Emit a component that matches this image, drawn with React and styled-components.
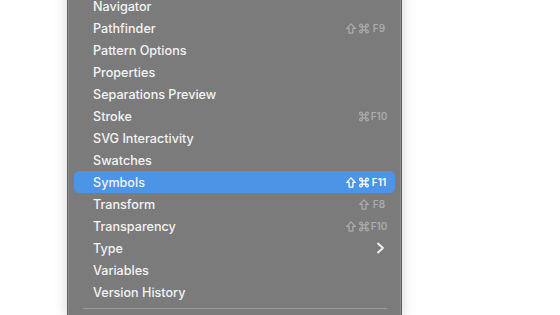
import React from "react";
import styled, { createGlobalStyle } from "styled-components";

const Global = createGlobalStyle`
  html, body { margin: 0; padding: 0; background: #ffffff; }
  body { font-family: Inter, "Noto Sans", "Liberation Sans", sans-serif; -webkit-font-smoothing: antialiased; }
`;

const Page = styled.div`
  width: 560px;
  height: 315px;
  overflow: hidden;
  background: #ffffff;
  padding-left: 67px;
  box-sizing: border-box;
`;

const Menu = styled.div`
  width: 335px;
  margin-top: -11px;
  padding: 5px 6px 8px;
  box-sizing: border-box;
  background: #7b7b7b;
  border: 1px solid #5e5e5e;
  box-shadow: inset 0 0 0 1px #8e8e8e, 0 0 12px rgba(0, 0, 0, 0.18);
  display: flex;
  flex-direction: column;
`;

const Row = styled.div`
  height: 22px;
  display: flex;
  align-items: center;
  padding: 0 7px 0 19px;
  border-radius: 5px;
  background: ${(p) => (p.$active ? "#4c95e6" : "transparent")};
  color: #f4f4f4;
  font-size: 12.6px;
  font-weight: 500;
`;

const Label = styled.span`
  flex: 1;
`;

const Shortcut = styled.span`
  display: flex;
  align-items: center;
  gap: 3px;
  color: ${(p) => (p.$active ? "#ffffff" : "#acacac")};
`;

const ModIcon = styled.svg`
  width: 10px;
  height: 11px;
  display: block;
`;

const Key = styled.span`
  font-size: 10px;
  font-weight: 600;
  width: 18px;
  margin-left: -2px;
  text-align: center;
`;

const Chevron = styled.svg`
  width: 9px;
  height: 12px;
  margin-right: 3px;
`;

const Separator = styled.div`
  height: 1px;
  background: #9a9a9a;
  margin: 5px 8px 0 9px;
`;

function Shift() {
  return (
    <ModIcon viewBox="0 0 10 11">
      <path
        d="M5 0.9 L9.2 5.4 L6.9 5.4 L6.9 10.1 L3.1 10.1 L3.1 5.4 L0.8 5.4 Z"
        fill="none"
        stroke="currentColor"
        strokeWidth="1.3"
        strokeLinejoin="round"
      />
    </ModIcon>
  );
}

function Cmd() {
  return (
    <ModIcon viewBox="0 0 10 11">
      <path
        d="M3.3 3.8 L6.7 3.8 L6.7 7.2 L3.3 7.2 Z M3.3 3.8 L3.3 2.6 A1.35 1.35 0 1 0 1.95 3.8 L3.3 3.8 M6.7 3.8 L6.7 2.6 A1.35 1.35 0 1 1 8.05 3.8 L6.7 3.8 M3.3 7.2 L3.3 8.4 A1.35 1.35 0 1 1 1.95 7.2 L3.3 7.2 M6.7 7.2 L6.7 8.4 A1.35 1.35 0 1 0 8.05 7.2 L6.7 7.2"
        fill="none"
        stroke="currentColor"
        strokeWidth="1.2"
      />
    </ModIcon>
  );
}

const items = [
  { label: "Navigator" },
  { label: "Pathfinder", mods: ["shift", "cmd"], key: "F9" },
  { label: "Pattern Options" },
  { label: "Properties" },
  { label: "Separations Preview" },
  { label: "Stroke", mods: ["cmd"], key: "F10" },
  { label: "SVG Interactivity" },
  { label: "Swatches" },
  { label: "Symbols", mods: ["shift", "cmd"], key: "F11", active: true },
  { label: "Transform", mods: ["shift"], key: "F8" },
  { label: "Transparency", mods: ["shift", "cmd"], key: "F10" },
  { label: "Type", submenu: true },
  { label: "Variables" },
  { label: "Version History" },
];

export default function App() {
  return (
    <Page>
      <Global />
      <Menu>
        {items.map((it) => (
          <Row key={it.label} $active={it.active}>
            <Label>{it.label}</Label>
            {it.key && (
              <Shortcut $active={it.active}>
                {it.mods.map((m) => (m === "shift" ? <Shift key={m} /> : <Cmd key={m} />))}
                <Key>{it.key}</Key>
              </Shortcut>
            )}
            {it.submenu && (
              <Chevron viewBox="0 0 9 12">
                <path d="M2 1.5 L7 6 L2 10.5" fill="none" stroke="#f4f4f4" strokeWidth="1.8" strokeLinecap="round" strokeLinejoin="round" />
              </Chevron>
            )}
          </Row>
        ))}
        <Separator />
      </Menu>
    </Page>
  );
}
